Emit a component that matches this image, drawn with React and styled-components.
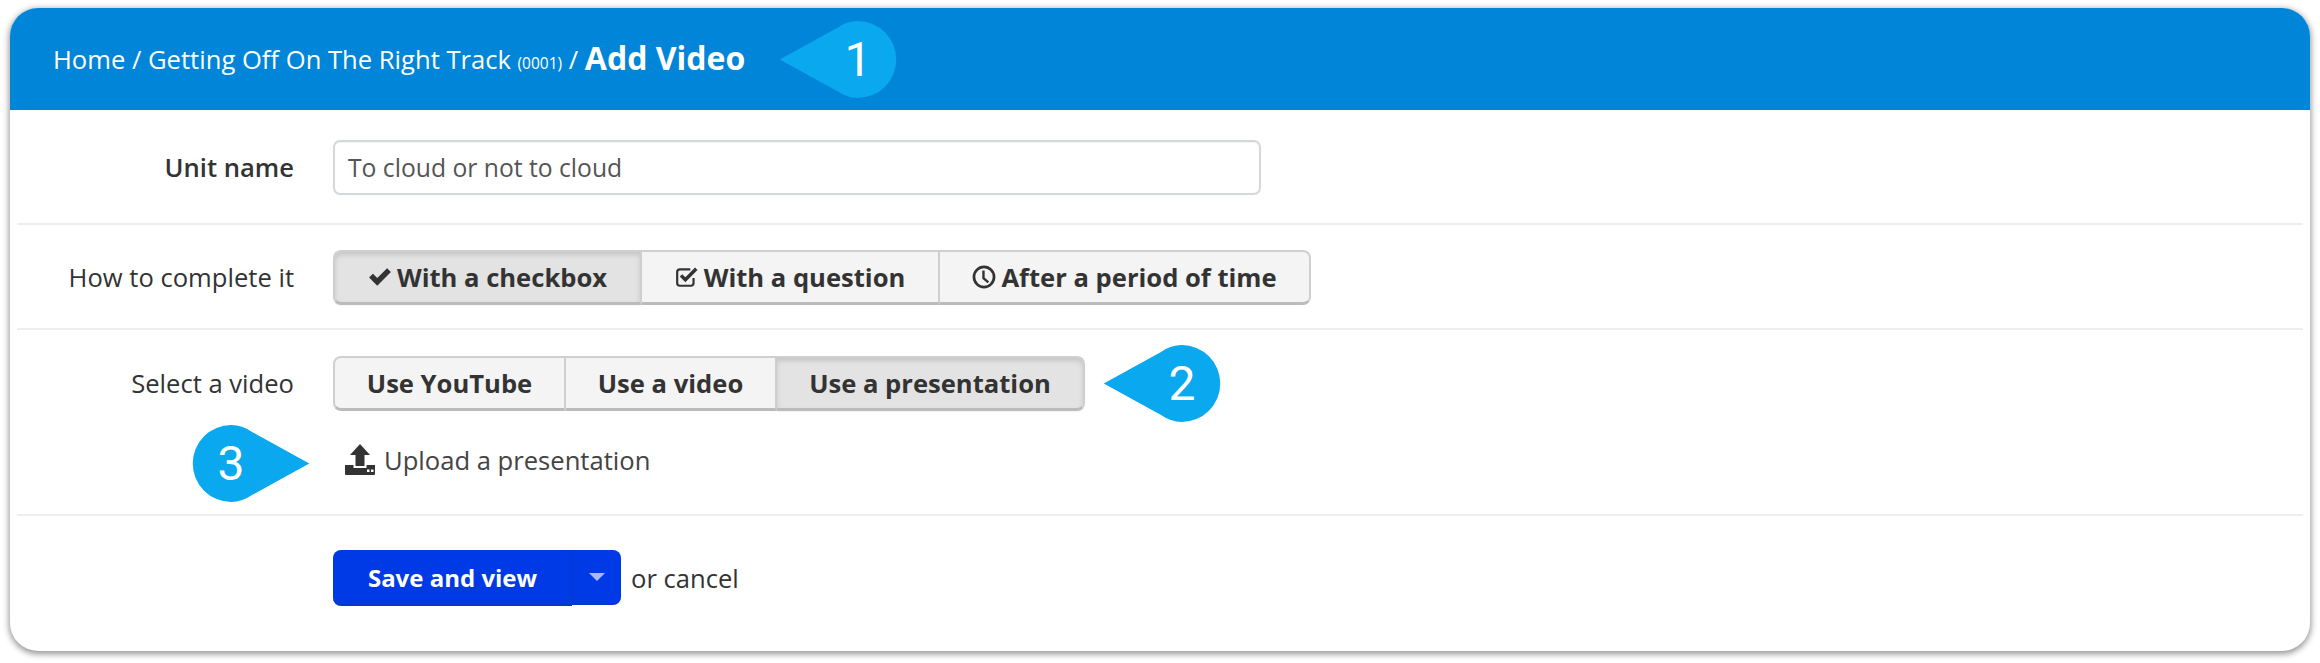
import React from "react";
import styled, { createGlobalStyle } from "styled-components";

const Global = createGlobalStyle`
  html, body { margin: 0; padding: 0; background: #fff; }
  body { font-family: "Open Sans", "Liberation Sans", sans-serif; color: #333; }
  #root { width: 2320px; height: 663px; overflow: hidden; }
`;

const Page = styled.div`
  padding: 8px 10px 12px;
  height: 663px;
  box-sizing: border-box;
`;
const Card = styled.div`
  position: relative;
  height: 643px;
  border-radius: 28px;
  background: #fff;
  box-shadow: 0 2px 6px 1px rgba(0, 0, 0, 0.42);
  overflow: hidden;
`;
const Header = styled.header`
  height: 102px;
  background: #0085d9;
  color: #fff;
  display: flex;
  align-items: center;
  padding-left: 43px;
  font-size: 25.6px;
  white-space: pre;
`;
const Small = styled.small`
  font-size: 15.5px;
  position: relative;
  top: 4px;
`;
const Strong = styled.strong`
  font-size: 32px;
  font-weight: 700;
  position: relative;
  top: -2px;
`;
const Row = styled.div`
  display: grid;
  grid-template-columns: 277px auto;
  column-gap: 39px;
  margin: 0 7px;
  height: ${(p) => p.$h}px;
  padding-top: ${(p) => p.$pt}px;
  box-sizing: border-box;
  border-bottom: ${(p) => (p.$last ? "none" : "2px solid #eeeeee")};
  align-content: start;
`;
const Label = styled.label`
  text-align: right;
  font-size: 25.6px;
  font-weight: ${(p) => (p.$bold ? 600 : 400)};
  line-height: ${(p) => p.$lh}px;
  color: #333;
`;
const Input = styled.div`
  width: 928px;
  height: 55px;
  box-sizing: border-box;
  border: 2px solid #d5d8da;
  border-radius: 7px;
  box-shadow: inset 0 1px 1px rgba(0,0,0,.05);
  padding-left: 13px;
  font-size: 24.7px;
  line-height: 51px;
  color: #555;
`;
const Group = styled.div`
  display: inline-flex;
  height: 55px;
  justify-self: start;
`;
const Seg = styled.button`
  height: 55px;
  box-sizing: border-box;
  width: ${(p) => p.$w}px;
  padding: 0;
  font-family: inherit;
  font-size: 25.6px;
  font-weight: 700;
  color: #333;
  display: flex;
  align-items: center;
  justify-content: center;
  gap: 5px;
  background: ${(p) => (p.$active ? "#e3e3e3" : "#f4f4f4")};
  border: 2px solid #cfcfcf;
  border-bottom: 3px solid #bbb;
  border-left-width: ${(p) => (p.$first ? 2 : 0)}px;
  border-radius: ${(p) => (p.$first ? "8px 0 0 8px" : p.$last ? "0 8px 8px 0" : "0")};
  box-shadow: ${(p) => (p.$active ? "inset 0 3px 5px rgba(0,0,0,.13), 0 1px 2px rgba(0,0,0,.05)" : "none")};
`;
const Upload = styled.div`
  grid-column: 2;
  display: flex;
  align-items: center;
  gap: 8px;
  margin-top: 30px;
  margin-left: 11px;
  font-size: 25.6px;
  color: #444;
  height: 36px;
`;
const SaveRow = styled.div`
  display: flex;
  align-items: center;
  gap: 10px;
  font-size: 25.6px;
  color: #333;
`;
const SaveMain = styled.button`
  width: 239px;
  height: 56px;
  border: none;
  border-bottom: 2px solid #0a37c4;
  border-radius: 8px 0 0 8px;
  background: #0039e6;
  color: #fff;
  font-family: inherit;
  font-size: 24px;
  font-weight: 700;
  padding: 0;
`;
const SaveCaret = styled.button`
  width: 49px;
  height: 55px;
  border: none;
  border-left: 1px solid #0a37c4;
  border-bottom: 2px solid #0a37c4;
  border-radius: 0 8px 8px 0;
  background: #0039e6;
  padding: 0;
  display: flex;
  align-items: center;
  justify-content: center;
  &::after {
    content: "";
    border-left: 8px solid transparent;
    border-right: 8px solid transparent;
    border-top: 8px solid #a9b9f5;
  }
`;
const SaveGroup = styled.div`
  display: flex;
  align-items: flex-start;
`;
const Callout = styled.div`
  position: absolute;
  left: ${(p) => p.$x}px;
  top: ${(p) => p.$y}px;
  width: 118px;
  height: 77px;
`;
const CalloutNum = styled.span`
  position: absolute;
  top: 0;
  line-height: 77px;
  left: ${(p) => p.$x}px;
  width: 40px;
  text-align: center;
  font-family: Roboto, sans-serif;
  font-weight: 400;
  font-size: 48px;
  color: #fff;
`;
const Shape = styled.svg`
  display: block;
  width: 100%;
  height: 100%;
`;

const Left = () => (
  <Shape viewBox="0 0 118 78"><path d="M0 39 L58 7 Q68 0 79 0 A39 39 0 0 1 79 78 Q68 78 58 71 Z" fill="#09a8ef" /></Shape>
);
const Right = () => (
  <Shape viewBox="0 0 118 78"><path d="M118 39 L60 71 Q50 78 39 78 A39 39 0 0 1 39 0 Q50 0 60 7 Z" fill="#09a8ef" /></Shape>
);

const Check = () => (
  <svg width="24" height="20" viewBox="0 0 22 18"><path d="M1 9.500 L4.500 6 L8.500 10 L17.500 1 L21 4.500 L8.500 17 Z" fill="#333" /></svg>
);
const CheckSquare = () => (
  <svg width="24" height="24" viewBox="0 0 22 22" fill="none"><path d="M17 12v4.500a2.500 2.500 0 0 1-2.500 2.500h-10A2.500 2.500 0 0 1 2 16.500v-10A2.500 2.500 0 0 1 4.500 4H14" stroke="#333" strokeWidth="2" /><path d="M5.500 9.500 L9.500 13.500 L19.500 3.500" stroke="#333" strokeWidth="3.200" /></svg>
);
const Clock = () => (
  <svg width="24" height="24" viewBox="0 0 22 22" fill="none"><circle cx="11" cy="11" r="9.200" stroke="#333" strokeWidth="2.500" /><path d="M10.500 5v7l4.500 4" stroke="#333" strokeWidth="2.200" /></svg>
);
const UploadIcon = () => (
  <svg width="32" height="32" viewBox="0 0 32 32"><path d="M16 0 L26 11 H20.500 V22 H11.500 V11 H6 Z" fill="#333" /><path d="M1 21 H9.500 V24 H22.500 V21 H31 V30 a1 1 0 0 1 -1 1 H2 a1 1 0 0 1 -1 -1 Z" fill="#333" /><rect x="23" y="25.500" width="2.500" height="2.500" fill="#fff" /><rect x="27" y="25.500" width="2.500" height="2.500" fill="#fff" /></svg>
);

export default function App() {
  return (
    <Page>
      <Global />
      <Card>
        <Header>
          Home / Getting Off On The Right Track <Small>(0001)</Small> / <Strong>Add Video</Strong>
        </Header>
        <Row $h={115} $pt={30}>
          <Label $bold $lh={55}>Unit name</Label>
          <Input>To cloud or not to cloud</Input>
        </Row>
        <Row $h={105} $pt={25}>
          <Label $lh={56}>How to complete it</Label>
          <Group>
            <Seg $first $active $w={309}><Check />With a checkbox</Seg>
            <Seg $w={298}><CheckSquare />With a question</Seg>
            <Seg $last $w={371}><Clock />After a period of time</Seg>
          </Group>
        </Row>
        <Row $h={186} $pt={26}>
          <Label $lh={56}>Select a video</Label>
          <Group>
            <Seg $first $w={233}>Use YouTube</Seg>
            <Seg $w={211}>Use a video</Seg>
            <Seg $last $active $w={308}>Use a presentation</Seg>
          </Group>
          <Upload><UploadIcon />Upload a presentation</Upload>
        </Row>
        <Row $h={135} $pt={34} $last>
          <div />
          <SaveRow>
            <SaveGroup>
              <SaveMain>Save and view</SaveMain>
              <SaveCaret aria-label="More" />
            </SaveGroup>
            or cancel
          </SaveRow>
        </Row>
        <Callout $x={769} $y={13}><Left /><CalloutNum $x={59}>1</CalloutNum></Callout>
        <Callout $x={1093} $y={337}><Left /><CalloutNum $x={59}>2</CalloutNum></Callout>
        <Callout $x={182} $y={417}><Right /><CalloutNum $x={19}>3</CalloutNum></Callout>
      </Card>
    </Page>
  );
}
